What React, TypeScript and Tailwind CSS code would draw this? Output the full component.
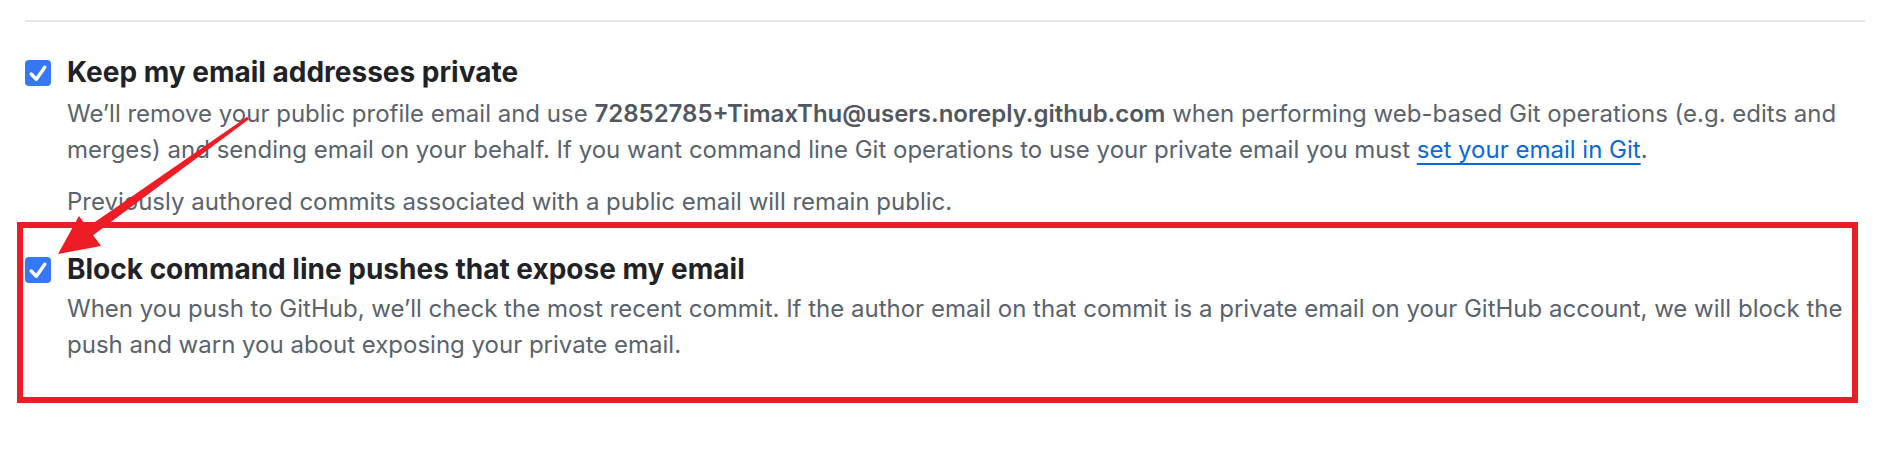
import React from "react"

const font = { fontFamily: "Inter, 'Noto Sans', sans-serif" }

function CheckedBox() {
  return (
    <svg width="26" height="26" viewBox="0 0 26 26" className="shrink-0 mt-[6px]">
      <rect x="0" y="0" width="26" height="26" rx="4" fill="#3478f6" />
      <path d="M6.2 14 L11.3 19.3 L19.8 7.2" fill="none" stroke="#fff" strokeWidth="3.4" strokeLinecap="round" strokeLinejoin="round" />
    </svg>
  )
}

function Annotation() {
  return (
    <svg className="absolute inset-0 pointer-events-none" width="1880" height="456" viewBox="0 0 1880 456">
      {/* highlight box */}
      <rect x="20" y="225" width="1835" height="175" fill="none" stroke="#ee1c25" strokeWidth="6" />
      {/* arrow shaft */}
      <polygon points="248.9,119.2 92.1,236.0 86.3,227.9 247.1,116.8" fill="#ee1c25" />
      {/* arrow head */}
      <polygon points="58,254 101,246 79,216" fill="#ee1c25" />
    </svg>
  )
}

export default function App() {
  return (
    <div className="relative w-[1880px] h-[456px] bg-white overflow-hidden" style={font}>
      <div className="pt-[20px] pl-[25px]">
        <div className="h-[2px] w-[1840px] bg-[#e4e7eb]" />

        {/* Keep email private */}
        <div className="mt-[32px] flex gap-[16px]">
          <CheckedBox />
          <div className="w-[1785px]">
            <div className="text-[28px] leading-[36px] font-bold text-[#1f2328]">
              Keep my email addresses private
            </div>
            <p className="mt-[6px] text-[24px] leading-[36px] text-[#59636e]">
              We’ll remove your public profile email and use{" "}
              <strong className="font-semibold text-[#4f5761]">72852785+TimaxThu@users.noreply.github.com</strong> when performing
              web-based Git operations (e.g. edits and merges) and sending email on your behalf. If you want command
              line Git operations to use your private email you must{" "}
              <a href="#" className="text-[#0969da] underline decoration-[2px] underline-offset-[5px]">
                set your email in Git
              </a>
              .
            </p>
            <p className="mt-[16px] text-[24px] leading-[36px] text-[#59636e]">
              Previously authored commits associated with a public email will remain public.
            </p>
          </div>
        </div>

        {/* Block command line pushes */}
        <div className="mt-[31px] flex gap-[16px]">
          <CheckedBox />
          <div className="w-[1785px]">
            <div className="text-[28px] leading-[36px] font-bold text-[#1f2328]">
              Block command line pushes that expose my email
            </div>
            <p className="mt-[4px] text-[24px] leading-[36px] text-[#59636e]">
              When you push to GitHub, we’ll check the most recent commit. If the author email on that commit is a
              private email on your GitHub account, we will block the push and warn you about exposing your private
              email.
            </p>
          </div>
        </div>
      </div>

      <Annotation />
    </div>
  )
}
